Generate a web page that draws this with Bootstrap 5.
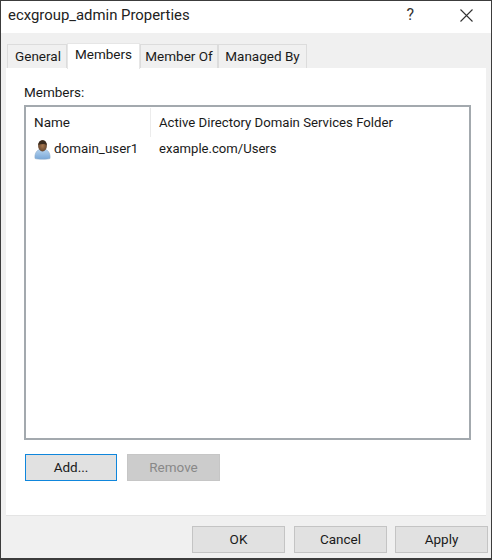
<!DOCTYPE html>
<html lang="en">
<head>
<meta charset="utf-8">
<title>ecxgroup_admin Properties</title>
<link href="https://cdn.jsdelivr.net/npm/bootstrap@5.3.0/dist/css/bootstrap.min.css" rel="stylesheet">
<style>
html,body{height:100%;margin:0;background:#f0f0f0}
body{font-family:Roboto,"Liberation Sans",sans-serif;font-size:13.5px;color:#1a1a1a;overflow:hidden}
.dlg{width:492px;height:560px;border:1px solid #3c3c3c;border-bottom-width:2px;background:#f0f0f0}
.ttl{height:32px;background:#fff;padding:0 18px 3px 7px}
.ttl-text{font-size:14.9px;color:#222}
.ttl-help{font-size:16px;margin-right:46px;color:#333;padding-bottom:2px}
.tabs{height:35px;padding:10px 0 0 6px;align-items:flex-end;border:0}
.tabs .nav-link{height:24px;padding:0;border:1px solid #dcdcdc;border-bottom:0;border-radius:0;background:#f0f0f0;color:#1a1a1a;margin:0;display:flex;align-items:center;justify-content:center}
.tabs .tab-general{width:60px;padding-left:2px}
.tabs .tab-members{width:73px}
.tabs .tab-of{width:78px}
.tabs .tab-by{width:89px}
.tabs .nav-link.active{height:26px;background:#fff;border-color:#e6e6e6;padding-bottom:5px;position:relative;margin-bottom:-1px;color:#1a1a1a}
.pane{width:480px;height:448px;margin-left:5px;background:#fff;padding:16px 14px 0 18px;border-bottom:1px solid #e4e4e4}
.lbl{height:21px;line-height:17px}
.listbox{width:447px;height:335px;border:2px solid #a3a9ae;background:#fff;padding:1px 0 0 8px}
.hdr{height:29px;align-items:center}
.col-a{width:116px;flex:none}
.col-b{border-left:1px solid #ececec;padding-left:8px;height:29px;line-height:29px;font-size:13.2px}
.rw{height:22px;align-items:center;margin-top:1px}
.name-cell{gap:3px;font-size:13.4px}
.loc-cell{padding-left:9px;font-size:13.1px}
.acts{gap:10px;margin-top:14px;padding-left:1px}
.wbtn{width:93px;height:27px;padding:0;border-radius:0;font-size:13.5px;line-height:1;background:#e1e1e1;border:1px solid #c4c4c4;color:#1a1a1a}
.wbtn:hover{background:#e1e1e1;border-color:#c4c4c4;color:#1a1a1a}
.wbtn.foc{width:92px;border:1px solid #0f86dc}
.wbtn.foc:hover{border-color:#0f86dc}
.wbtn.off,.wbtn.off:disabled{background:#cccccc;border-color:#c6c6c6;color:#888;opacity:1}
.foot{padding:10px 3px 0 0;justify-content:flex-end}
.gap-nine{margin-right:9px}
.gap-eight{margin-right:8px}
</style>
</head>
<body>
<div class="dlg d-flex flex-column">
  <div class="ttl d-flex align-items-center">
    <span class="ttl-text flex-grow-1">ecxgroup_admin Properties</span>
    <span class="ttl-help">?</span>
    <svg width="13" height="13" viewBox="0 0 13 13" aria-label="Close"><path d="M.5.5 12.500 12.500M12.500.5.5 12.500" stroke="#333" stroke-width="1.1" fill="none"/></svg>
  </div>
  <ul class="nav nav-tabs tabs flex-nowrap">
    <li class="nav-item"><a class="nav-link tab-general" href="#">General</a></li>
    <li class="nav-item"><a class="nav-link tab-members active" href="#">Members</a></li>
    <li class="nav-item"><a class="nav-link tab-of" href="#">Member Of</a></li>
    <li class="nav-item"><a class="nav-link tab-by" href="#">Managed By</a></li>
  </ul>
  <div class="pane">
    <div class="lbl">Members:</div>
    <div class="listbox">
      <div class="hdr d-flex">
        <div class="col-a">Name</div>
        <div class="col-b">Active Directory Domain Services Folder</div>
      </div>
      <div class="rw d-flex">
        <div class="col-a name-cell d-flex align-items-center">
          <svg width="17" height="21" viewBox="0 0 17 21" aria-hidden="true">
            <defs>
              <linearGradient id="bd" x1="0" y1="0" x2="0" y2="1"><stop offset="0" stop-color="#b4d2ee"/><stop offset="1" stop-color="#7aa8d8"/></linearGradient>
              <radialGradient id="hd" cx=".5" cy=".5" r=".7"><stop offset="0" stop-color="#a8784f"/><stop offset="1" stop-color="#4f3624"/></radialGradient>
            </defs>
            <path d="M1 19.500c-.6-4 1-8 4.500-9h6c3.500 1 5 5 4.500 9-1.500 1-13 1-15 0z" fill="url(#bd)" stroke="#8aa8c6" stroke-width=".5"/>
            <ellipse cx="8.500" cy="6.800" rx="4.400" ry="5.600" fill="url(#hd)"/>
            <path d="M4.200 6C4.700 2.200 6.700 1.200 8.700 1.200c2.400 0 3.900 1.700 4.100 4.800C11 4.500 7 4.500 4.200 6z" fill="#3a2b1e"/>
          </svg>
          <span>domain_user1</span>
        </div>
        <div class="loc-cell">example.com/Users</div>
      </div>
    </div>
    <div class="acts d-flex">
      <button type="button" class="btn wbtn foc">Add...</button>
      <button type="button" class="btn wbtn off" disabled>Remove</button>
    </div>
  </div>
  <div class="foot d-flex">
    <button type="button" class="btn wbtn gap-nine">OK</button>
    <button type="button" class="btn wbtn gap-eight">Cancel</button>
    <button type="button" class="btn wbtn">Apply</button>
  </div>
</div>
<script src="https://cdn.jsdelivr.net/npm/bootstrap@5.3.0/dist/js/bootstrap.bundle.min.js"></script>
</body>
</html>
